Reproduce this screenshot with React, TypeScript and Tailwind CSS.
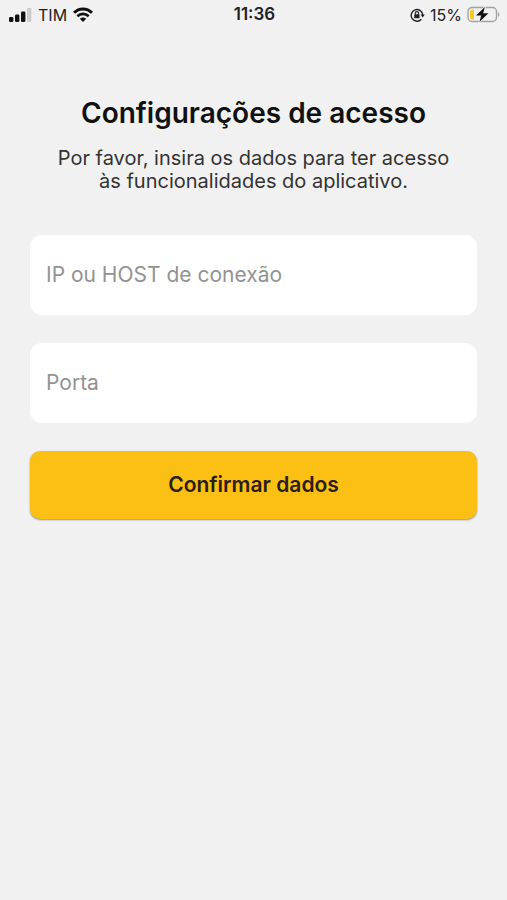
import { useState } from 'react'

const fields = [
  { id: 'host', label: 'IP ou HOST de conexão' },
  { id: 'port', label: 'Porta' },
]

function SignalIcon() {
  return (
    <svg width="23" height="14" viewBox="0 0 23 14" fill="#111" aria-hidden="true">
      <rect x="0" y="9" width="4.4" height="5" rx="1.3" />
      <rect x="6" y="6.5" width="4.4" height="7.5" rx="1.3" />
      <rect x="12" y="3.5" width="4.4" height="10.5" rx="1.3" />
      <rect x="18" y="0" width="4.4" height="14" rx="1.3" fill="#cdcdcd" />
    </svg>
  )
}

function WifiIcon() {
  return (
    <svg width="20" height="15" viewBox="0 0 20 15" fill="none" stroke="#111" strokeWidth="3" aria-hidden="true">
      <path d="M1 5.8C6 .6 14 .6 19 5.8" />
      <path d="M4.3 9.3c3.3-3.2 8.1-3.2 11.4 0" strokeWidth="2.6" />
      <path d="M10 15 6.8 11.8c1.8-1.6 4.6-1.6 6.4 0z" fill="#111" stroke="none" />
    </svg>
  )
}

function RotationLockIcon() {
  return (
    <svg width="15" height="14" viewBox="0 0 15 14" fill="none" stroke="#222" aria-hidden="true">
      <path d="M11.4 11.2A5.8 5.8 0 1 1 12.8 7" strokeWidth="1.4" />
      <path d="M10.6 6.6h4.2l-2.1 2.8z" fill="#222" stroke="none" />
      <rect x="4.2" y="6.2" width="5.4" height="4" rx=".7" fill="#222" stroke="none" />
      <path d="M5.3 6.4V5.2a1.6 1.6 0 0 1 3.2 0v1.2" strokeWidth="1.2" />
    </svg>
  )
}

function BatteryIcon() {
  return (
    <svg width="33" height="17" viewBox="0 0 33 17" aria-hidden="true">
      <rect x="1" y="1.5" width="28.5" height="14" rx="4" fill="none" stroke="#a3a3a3" strokeWidth="1.4" />
      <path d="M31 6.2c1.8.6 1.8 4 0 4.6z" fill="#a3a3a3" />
      <path d="M5 3.5h2v10H5a2 2 0 0 1-2-2v-6a2 2 0 0 1 2-2z" fill="#f5cb2c" />
      <path
        d="M17.8 1 9 9.6h5.2L12.4 16l9-8.8h-5.2z"
        fill="#111"
        stroke="#f1f1f1"
        strokeWidth="1.6"
        paintOrder="stroke"
      />
    </svg>
  )
}

function StatusBar() {
  return (
    <header className="grid h-[29px] grid-cols-3 items-center pr-[7px] pl-[9px] text-base text-[#222]">
      <div className="flex items-center gap-[6px]">
        <SignalIcon />
        <span>TIM</span>
        <WifiIcon />
      </div>
      <time className="text-center text-[17px] font-semibold">11:36</time>
      <div className="flex items-center justify-end gap-[5px]">
        <RotationLockIcon />
        <span>15%</span>
        <BatteryIcon />
      </div>
    </header>
  )
}

export default function App() {
  const [values, setValues] = useState<Record<string, string>>({ host: '', port: '' })

  return (
    <div className="min-h-screen bg-[#f1f1f1] font-['Inter',sans-serif]">
      <StatusBar />
      <main className="px-[30px] pt-[66px]">
        <h1 className="text-center text-[28px] leading-9 font-semibold text-[#111]">Configurações de acesso</h1>
        <p className="mt-4 text-center text-xl leading-[23px] text-[#333]">
          Por favor, insira os dados para ter acesso
          <br />
          às funcionalidades do aplicativo.
        </p>
        <form className="mt-[42px] flex flex-col gap-7" onSubmit={(e) => e.preventDefault()}>
          {fields.map((field) => (
            <input
              key={field.id}
              id={field.id}
              type="text"
              aria-label={field.label}
              placeholder={field.label}
              value={values[field.id]}
              onChange={(e) => setValues({ ...values, [field.id]: e.target.value })}
              className="h-20 w-full rounded-xl bg-white px-4 pb-0.5 text-[21px] text-[#222] outline-none placeholder:text-[#929292]"
            />
          ))}
          <button
            type="submit"
            className="h-[68px] w-full rounded-[10px] bg-[#fcc015] text-[21px] font-semibold text-[#2b1d10] shadow-[0_1px_2px_rgba(0,0,0,0.4)]"
          >
            Confirmar dados
          </button>
        </form>
      </main>
    </div>
  )
}
